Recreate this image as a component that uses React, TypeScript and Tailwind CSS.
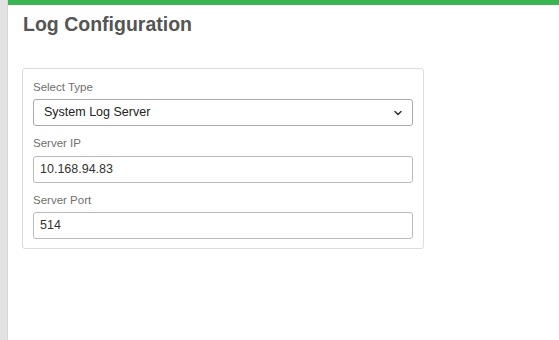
import { ChevronDown } from 'lucide-react';

export default function App() {
  return (
    <div className="flex h-[340px] w-[559px] overflow-hidden bg-white font-['Liberation_Sans',Arial,sans-serif]">
      <div className="w-[8px] shrink-0 bg-[#e3e3e3] border-r border-[#d6d6d6]" />
      <div className="flex-1 flex flex-col">
        <div className="h-[5px] bg-[#3bb554]" />
        <h1 className="ml-[15px] mt-[8px] text-[19.5px] leading-[22px] font-bold text-[#555]">Log Configuration</h1>

        <div className="ml-[14px] mt-[33px] w-[402px] rounded-[3px] border border-[#dcdcdc] px-[10px] pt-[11px] pb-[9px] flex flex-col">
          <label className="text-[11.5px] leading-[14px] text-[#6f6f6f] mb-[5px]">Select Type</label>
          <div className="relative h-[27px] rounded-[3px] border border-[#aaa] flex items-center pl-[10px] pr-[8px]">
            <span className="flex-1 text-[12.5px] text-[#222]">System Log Server</span>
            <ChevronDown className="w-[12px] h-[12px] text-[#333]" strokeWidth={3} />
          </div>

          <label className="text-[11.5px] leading-[14px] text-[#6f6f6f] mt-[10px] mb-[6px]">Server IP</label>
          <div className="h-[27px] rounded-[3px] border border-[#bbb] flex items-center px-[6px] text-[12.5px] text-[#333]">
            10.168.94.83
          </div>

          <label className="text-[11.5px] leading-[14px] text-[#6f6f6f] mt-[10px] mb-[5px]">Server Port</label>
          <div className="h-[27px] rounded-[3px] border border-[#bbb] flex items-center px-[6px] text-[12.5px] text-[#333]">
            514
          </div>
        </div>
      </div>
    </div>
  );
}
